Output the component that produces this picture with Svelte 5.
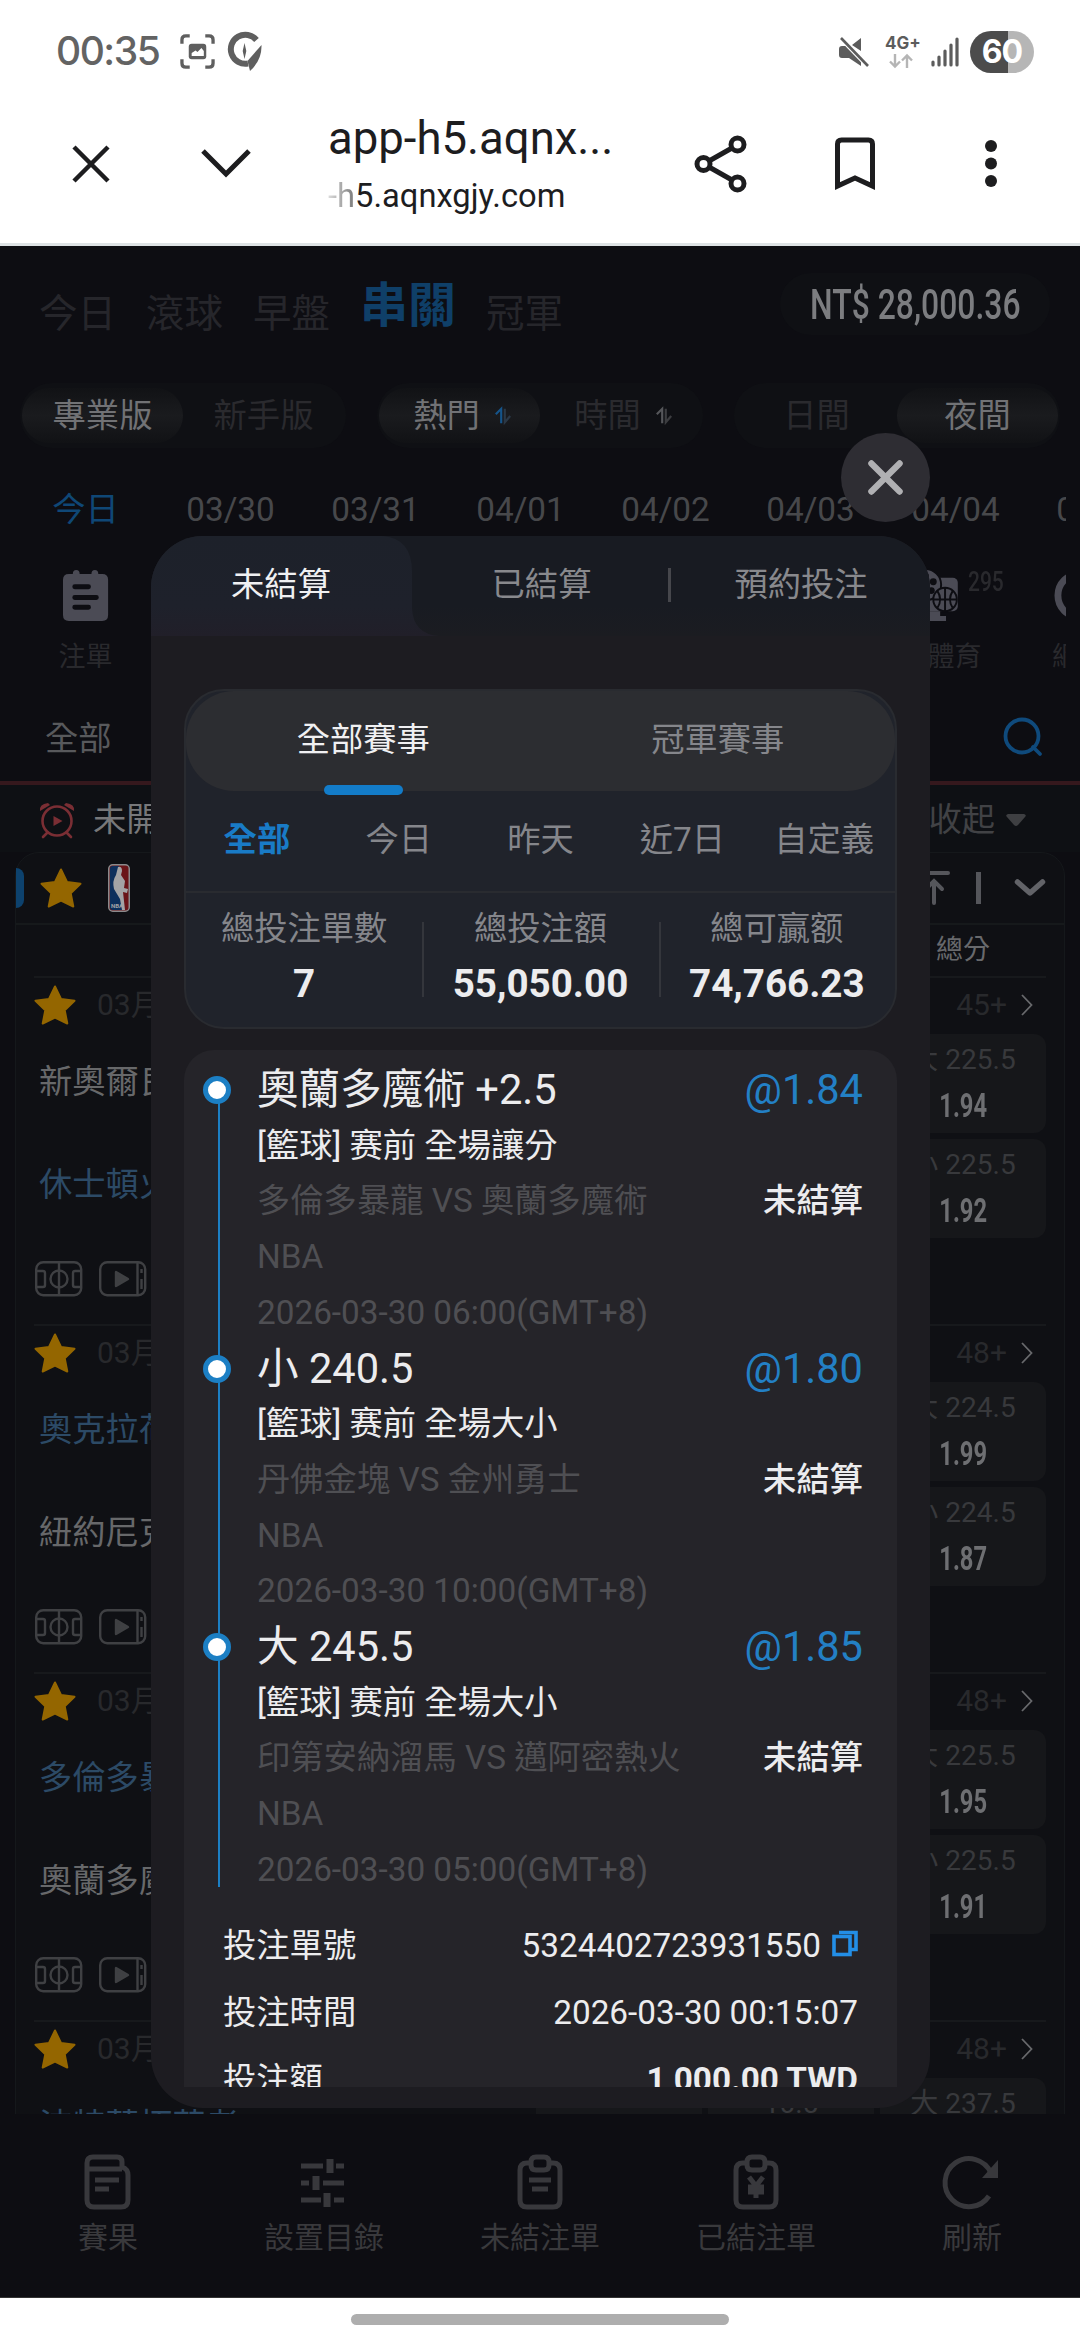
<script lang="ts">
interface Game {
  date: string;
  more: string;
  home: string;
  away: string;
  fav: "home" | "away";
  spread: string;
  over: [string, string];
  under: [string, string];
}

interface Leg {
  pick: string;
  odds: string;
  market: string;
  teams: string;
  time: string;
}

const NAV = ["今日", "滾球", "早盤", "串關", "冠軍"];
const DATES = ["今日", "03/30", "03/31", "04/01", "04/02", "04/03", "04/04", "04/05"];
const PERIODS = ["全部", "今日", "昨天", "近7日", "自定義"];

const STATS = [
  { label: "總投注單數", value: "7" },
  { label: "總投注額", value: "55,050.00" },
  { label: "總可贏额", value: "74,766.23" },
];

const GAMES: Game[] = [
  { date: "03月30日", more: "45+", home: "新奧爾良鵜鶘", away: "休士頓火箭", fav: "away", spread: "5.5", over: ["225.5", "1.94"], under: ["225.5", "1.92"] },
  { date: "03月30日", more: "48+", home: "奧克拉荷馬雷霆", away: "紐約尼克", fav: "home", spread: "8.5", over: ["224.5", "1.99"], under: ["224.5", "1.87"] },
  { date: "03月30日", more: "48+", home: "多倫多暴龍", away: "奧蘭多魔術", fav: "home", spread: "2.5", over: ["225.5", "1.95"], under: ["225.5", "1.91"] },
  { date: "03月30日", more: "48+", home: "波特蘭拓荒者", away: "華盛頓巫師", fav: "home", spread: "10.5", over: ["237.5", "1.93"], under: ["237.5", "1.93"] },
];

const LEGS: Leg[] = [
  { pick: "奧蘭多魔術 +2.5", odds: "@1.84", market: "[籃球] 赛前 全場讓分", teams: "多倫多暴龍 VS 奧蘭多魔術", time: "2026-03-30 06:00(GMT+8)" },
  { pick: "小 240.5", odds: "@1.80", market: "[籃球] 赛前 全場大小", teams: "丹佛金塊 VS 金州勇士", time: "2026-03-30 10:00(GMT+8)" },
  { pick: "大 245.5", odds: "@1.85", market: "[籃球] 赛前 全場大小", teams: "印第安納溜馬 VS 邁阿密熱火", time: "2026-03-30 05:00(GMT+8)" },
];

let nav = $state("串關");
let date = $state("今日");
let period = $state("全部");
let open = $state(true);
</script>

{#snippet star()}
  <svg class="star" viewBox="0 0 42 40"><path d="M21 1.500 27 14l13.500 1.800-9.800 9.500 2.600 13.200L21 32.500 8.700 38.500l2.600-13.200L1.500 15.800 15 14z" fill="#946600" stroke="#946600" stroke-width="2" stroke-linejoin="round" /></svg>
{/snippet}

{#snippet sort(active: boolean)}
  <svg class="sort" viewBox="0 0 20 20" fill="none" stroke-width="2.400">
    <path d="M2 8 8 2v16" stroke={active ? "#15548a" : "#55565a"} />
    <path d="M12 2v15l6-7" stroke={active ? "#2b3846" : "#3c3d40"} />
  </svg>
{/snippet}

<div class="screen">
  <div class="status">
    <span class="clock">00:35</span>
    <svg class="shot" viewBox="0 0 36 36" fill="none" stroke="#5f5f5f" stroke-width="3.400">
      <path d="M2 10V6q0-4 4-4h4M26 2h4q4 0 4 4v4M34 26v4q0 4-4 4h-4M10 34H6q-4 0-4-4v-4" />
      <rect x="9" y="10" width="18" height="16" rx="3" fill="#5f5f5f" stroke="none" />
      <path d="M12 22.500v-3l4-2.500 2 1.500 4-4 2.500 3v5z" fill="#fff" stroke="none" />
    </svg>
    <svg class="compass" viewBox="0 0 36 40">
      <path d="M29.500 8A14.500 14.500 0 1 0 21 31.500" fill="none" stroke="#5f5f5f" stroke-width="6" />
      <path d="M34.500 13 20.500 29 23 39q12-11 11.500-26z" fill="#5f5f5f" />
      <path d="M17.500 11l1.800 8-1.800 8-1.800-8z" fill="#5f5f5f" />
    </svg>
    <span class="grow"></span>
    <svg class="mute" viewBox="0 0 30 30">
      <path d="M0 12q0-3 3-3h5l14 14v6L10 21H3q-3 0-3-3zM22 1v13L13 8z" fill="#5c5c5c" />
      <path d="M2 1 29 29" stroke="#fff" stroke-width="5" /><path d="M2 1 29 29" stroke="#5c5c5c" stroke-width="2.600" />
    </svg>
    <div class="net">
      <span>4G+</span>
      <svg viewBox="0 0 24 14" fill="none" stroke="#b5b5b5" stroke-width="2.400"><path d="M6 0v12M1 7.500l5 5 5-5M18 14V2M13 6.500l5-5 5 5" /></svg>
    </div>
    <svg class="signal" viewBox="0 0 28 30" stroke="#5c5c5c" stroke-width="3.200" stroke-linecap="round"><path d="M2 25v3M8 20v8M14 14v14M20 8v20M26 2v26" /></svg>
    <div class="battery">60</div>
  </div>

  <div class="browser">
    <svg class="b-close" viewBox="0 0 38 38" stroke="#1d1d1f" stroke-width="4.500"><path d="M2 2l34 34M36 2 2 36" /></svg>
    <svg class="b-down" viewBox="0 0 50 30" fill="none" stroke="#1d1d1f" stroke-width="5"><path d="M2 2l23 23L48 2" /></svg>
    <div class="url">
      <span class="title">app-h5.aqnx...</span>
      <span class="host"><i>-h</i>5.aqnxgjy.com</span>
    </div>
    <svg class="b-share" viewBox="0 0 54 58" fill="none" stroke="#1d1d1f" stroke-width="5">
      <circle cx="9.500" cy="29" r="6.500" /><circle cx="43.500" cy="9.500" r="6.500" /><circle cx="43.500" cy="48.500" r="6.500" />
      <path d="M15 26 38 13M15 32l23 13" />
    </svg>
    <svg class="b-mark" viewBox="0 0 42 54" fill="none" stroke="#1d1d1f" stroke-width="5"><path d="M3.500 49V7q0-4 4-4h27q4 0 4 4v42L21 41z" /></svg>
    <svg class="b-dots" viewBox="0 0 14 50" fill="#1d1d1f"><circle cx="7" cy="7" r="6" /><circle cx="7" cy="24.500" r="6" /><circle cx="7" cy="42" r="6" /></svg>
  </div>

  <div class="app">
    <div class="top">
      {#each NAV as n (n)}
        <button type="button" class:active={nav === n} onclick={() => (nav = n)}>{n}</button>
      {/each}
      <div class="balance"><span>NT$ 28,000.36</span></div>
    </div>

    <div class="modes">
      <div class="seg"><span class="on">專業版</span><span>新手版</span></div>
      <div class="seg sorted"><span class="on">熱門{@render sort(true)}</span><span>時間{@render sort(false)}</span></div>
      <div class="seg"><span>日間</span><span class="on">夜間</span></div>
    </div>

    <div class="dates">
      {#each DATES as d (d)}
        <button type="button" class:active={date === d} onclick={() => (date = d)}>{d}</button>
      {/each}
    </div>

    <div class="sports">
      <div class="sport">
        <svg viewBox="0 0 46 52"><path d="M6 4h4q0-4 3.500-4T17 4h12q0-4 3.500-4T36 4h4q6 0 6 6v36q0 6-6 6H6q-6 0-6-6V10q0-6 6-6z" fill="#4b4b55" /><path d="M12 17h14M12 28h22M12 38h14" stroke="#0d0d12" stroke-width="5" stroke-linecap="round" /></svg>
        <span>注單</span>
      </div>
      <span class="grow"></span>
      <div class="sport">
        <svg viewBox="0 0 62 52">
          <rect x="8" y="8" width="54" height="34" rx="5" fill="#4b4b55" /><path d="M26 42h18v5h6v5H20v-5h6z" fill="#4b4b55" />
          <circle cx="29" cy="15" r="16" fill="#4b4b55" stroke="#0d0d12" stroke-width="2" />
          <g fill="#0d0d12"><circle cx="29" cy="6" r="3.500" /><circle cx="37" cy="12" r="3.500" /><circle cx="35" cy="21" r="3.500" /><circle cx="23" cy="21" r="3.500" /></g>
          <g fill="#4b4b55" stroke="#0d0d12" stroke-width="2"><circle cx="49" cy="30" r="12" /><path d="M37 30h24M49 18v24M41 21q6 9 0 18M57 21q-6 9 0 18" fill="none" /></g>
        </svg>
        <span>電子體育</span>
        <b>295</b>
      </div>
      <div class="sport last">
        <svg viewBox="0 0 52 52" fill="none" stroke="#4b4b55"><circle cx="26" cy="26" r="22" stroke-width="7" /><circle cx="26" cy="26" r="11" stroke-width="4" /></svg>
        <span>網球</span>
      </div>
    </div>

    <div class="search">
      <span>全部</span>
      <svg viewBox="0 0 40 40" fill="none" stroke="#0f4a7c" stroke-width="3.800"><circle cx="19" cy="19" r="16.500" /><path d="M30 30l7 7" stroke-linecap="round" /></svg>
    </div>

    <div class="group">
      <svg class="alarm" viewBox="0 0 36 36" fill="none" stroke="#7a2e34" stroke-width="2.600">
        <circle cx="18" cy="19" r="14.500" /><path d="M8 31l-4 4M28 31l4 4" stroke-linecap="round" />
        <path d="M1 9q-1-7 8-8l2 2zM35 9q1-7-8-8l-2 2zM14.500 14v10l9-5z" fill="#7a2e34" stroke="none" />
      </svg>
      <span class="label">未開賽</span>
      <span class="fold">收起</span>
      <svg class="tri" viewBox="0 0 20 12"><path d="M2 0h16q3 1 1 3l-7 8q-2 2-4 0L1 3Q-1 1 2 0z" fill="#3e3f42" /></svg>
    </div>

    <div class="league">
      <div class="league-head">
        <i class="mark"></i>
        {@render star()}
        <svg class="nba" viewBox="0 0 22 48">
          <rect x=".75" y=".75" width="20.500" height="46.500" rx="4" fill="#6a1418" stroke="#8a8a8c" stroke-width="1.500" />
          <path d="M2 5q0-3 3-3h6L9 12l3 14 4 10-2 10H5q-3 0-3-3z" fill="#0d2f5c" />
          <path d="M10 3q4-1 4 4l-1 4 4 6-1 7 4 1-1 4-4-1 2 18H14l-2-11-6-10q-2-8 2-14z" fill="#a3a3a5" />
          <text x="3" y="44" font-size="6" font-weight="700" fill="#a3a3a5">NBA</text>
        </svg>
        <span class="grow"></span>
        <svg class="pin" viewBox="0 0 36 36" fill="none" stroke="#55565b" stroke-width="4" stroke-linecap="round"><path d="M6 3h28M20 33V12M12 19l8-8 8 8" /></svg>
        <i class="bar"></i>
        <svg class="chev" viewBox="0 0 32 20" fill="none" stroke="#626368" stroke-width="5.500" stroke-linecap="round" stroke-linejoin="round"><path d="M3.500 4 16 15 28.500 4" /></svg>
      </div>
      <div class="cols"><span>獨贏</span><span>讓分</span><span>總分</span></div>

      {#each GAMES as g (g.home)}
        <div class="game">
          <div class="meta">
            {@render star()}
            <span>{g.date}</span>
            <span class="more">{g.more}</span>
            <svg class="next" viewBox="0 0 12 22" fill="none" stroke="#68696c" stroke-width="1.800"><path d="M1 1l9.500 10L1 21" /></svg>
          </div>
          <div class="body">
            <div class="teams">
              <span class:fav={g.fav === "home"}>{g.home}</span>
              <span class:fav={g.fav === "away"}>{g.away}</span>
            </div>
            <div class="odds">
              <div class="cell"></div>
              <div class="cell"><span>{g.spread}</span></div>
              <div class="cell"><span>大 {g.over[0]}</span><b>{g.over[1]}</b></div>
              <div class="cell"></div>
              <div class="cell"><span>{g.spread}</span></div>
              <div class="cell"><span>小 {g.under[0]}</span><b>{g.under[1]}</b></div>
            </div>
          </div>
          <div class="links">
            <svg viewBox="0 0 48 36" fill="none" stroke="#3f4043" stroke-width="2.400"><rect x="1.200" y="1.200" width="45" height="33" rx="7" /><circle cx="24" cy="18" r="8.500" /><path d="M24 1v33M1 10h7q2 0 2 2v12q0 2-2 2H1M47 10h-7q-2 0-2 2v12q0 2 2 2h7" /></svg>
            <svg viewBox="0 0 48 36" fill="none" stroke="#3f4043" stroke-width="2.400"><rect x="1.200" y="1.200" width="45" height="33" rx="7" /><path d="M38.500 1v34M42.500 8v4M42.500 18v10" /><path d="M17 11v14l12-7z" fill="#3f4043" stroke-linejoin="round" /></svg>
          </div>
        </div>
      {/each}
    </div>
  </div>

  <div class="tabbar">
    <div>
      <svg viewBox="0 0 56 56"><path d="M7 46V9q0-6 6-6h24q5 0 5 5v5q6 2 6 8v25q0 7-7 7H14q-7 0-7-7zM8 15h34M15 26h24M15 35h14" /></svg>
      <span>賽果</span>
    </div>
    <div>
      <svg viewBox="0 0 56 56"><path d="M5 12h22M40 12h8M5 29h8M27 29h21M5 46h20M38 46h10" /><path class="knob" d="M34 5v14M20 22v14M31 39v14" /></svg>
      <span>設置目錄</span>
    </div>
    <div>
      <svg viewBox="0 0 56 56"><path d="M19 9h-4q-7 0-7 7v30q0 7 7 7h26q7 0 7-7V16q0-7-7-7h-4M24 3h8q5 0 5 5v3q0 5-5 5h-8q-5 0-5-5V8q0-5 5-5zM17 26h22M20 35h16" /></svg>
      <span>未結注單</span>
    </div>
    <div>
      <svg viewBox="0 0 56 56"><path d="M19 9h-4q-7 0-7 7v30q0 7 7 7h26q7 0 7-7V16q0-7-7-7h-4M24 3h8q5 0 5 5v3q0 5-5 5h-8q-5 0-5-5V8q0-5 5-5zM21 23l7 9 7-9M20 33h16M20 38h16M28 32v12" /></svg>
      <span>已結注單</span>
    </div>
    <div>
      <svg viewBox="0 0 56 56"><path d="M45 42A24 24 0 1 1 47 19" /><path class="tip" d="M54 6v18H38z" /></svg>
      <span>刷新</span>
    </div>
  </div>

  <div class="gesture"><i></i></div>

  {#if open}
    <button type="button" class="close" aria-label="close" onclick={() => (open = false)}>
      <svg viewBox="0 0 36 36" stroke="#b0b0b3" stroke-width="6.500" stroke-linecap="round"><path d="M3.500 3.500l29 29M32.500 3.500l-29 29" /></svg>
    </button>

    <div class="modal">
      <div class="modal-tabs">
        <svg class="tab-bg" viewBox="0 0 288 100" preserveAspectRatio="none">
          <defs><linearGradient id="tab" x2="0" y2="1"><stop offset="0" stop-color="#1d212a" /><stop offset=".7" stop-color="#1e212b" /><stop offset="1" stop-color="#211f29" /></linearGradient></defs>
          <path d="M0 0h231q30 2 30 36v36q1 26 27 28H0z" fill="url(#tab)" />
        </svg>
        <span class="on">未結算</span>
        <span>已結算</span>
        <span>預約投注</span>
      </div>

      <div class="summary">
        <div class="kinds">
          <span class="on">全部賽事</span>
          <span>冠軍賽事</span>
        </div>
        <div class="periods">
          {#each PERIODS as p (p)}
            <button type="button" class:active={period === p} onclick={() => (period = p)}>{p}</button>
          {/each}
        </div>
        <div class="stats">
          {#each STATS as s (s.label)}
            <div><span>{s.label}</span><b>{s.value}</b></div>
          {/each}
        </div>
      </div>

      <div class="ticket">
        <div class="legs">
          {#each LEGS as leg (leg.pick)}
            <div class="leg">
              <i class="dot"></i>
              <div class="pick"><span>{leg.pick}</span><span class="at">{leg.odds}</span></div>
              <div class="market">{leg.market}</div>
              <div class="dim">{leg.teams}<b>未結算</b></div>
              <div class="dim">NBA</div>
              <div class="dim">{leg.time}</div>
            </div>
          {/each}
        </div>
        <div class="details">
          <div>
            <span>投注單號</span>
            <span class="no">5324402723931550
              <svg viewBox="0 0 26 26" fill="none" stroke="#238ee6" stroke-width="3.600"><rect x="2" y="6.500" width="16" height="18" /><path d="M7 2.500h17v17h-5" /></svg>
            </span>
          </div>
          <div><span>投注時間</span><span>2026-03-30 00:15:07</span></div>
          <div><span>投注額</span><b>1,000.00 TWD</b></div>
        </div>
      </div>
    </div>
  {/if}
</div>

<style>
  :global(body) { margin: 0; background: #fff; }
  .screen {
    position: relative;
    width: 1080px;
    height: 2340px;
    overflow: hidden;
    display: flex;
    flex-direction: column;
    background: #fff;
    font-family: Roboto, "Noto Sans CJK TC", sans-serif;
    font-size: 33.3px;
    line-height: 1.2;
  }
  .screen * { box-sizing: border-box; }
  svg { display: block; flex-shrink: 0; overflow: visible; }
  button { background: none; border: 0; padding: 0; margin: 0; font: inherit; color: inherit; cursor: pointer; white-space: nowrap; }
  .grow { flex: 1; }

  .status { height: 103px; padding: 0 46px 0 56px; display: flex; align-items: center; }
  .clock { width: 124px; font-family: Inter, sans-serif; font-size: 39px; font-weight: 500; letter-spacing: -1.5px; color: #636363; }
  .shot { width: 35px; height: 35px; margin-right: 12px; }
  .compass { width: 36px; height: 40px; }
  .mute { width: 30px; height: 30px; margin-right: 16px; }
  .net { width: 36px; margin-right: 10px; font-family: Inter, sans-serif; font-size: 17px; line-height: 15px; font-weight: 700; color: #5c5c5c; display: flex; flex-direction: column; gap: 3px; }
  .net svg { width: 24px; height: 14px; margin-left: 4px; }
  .signal { width: 28px; height: 30px; margin-right: 11px; }
  .battery { width: 64px; height: 42px; border-radius: 21px; background: linear-gradient(90deg, #4c4c4c 60%, #b6b6b6 60%); color: #fff; font: 700 32px/42px Inter, sans-serif; letter-spacing: -1px; text-align: center; }

  .browser { height: 143px; padding: 0 82px 19px 72px; display: flex; align-items: center; color: #1d1d1f; border-bottom: 3px solid #dde2e4; }
  .b-close { width: 38px; height: 38px; margin-right: 91px; }
  .b-down { width: 50px; height: 30px; margin-right: 77px; }
  .url { width: 367px; padding-top: 4px; display: flex; flex-direction: column; }
  .title { font-size: 45.5px; line-height: 60px; }
  .host { font-size: 32.7px; line-height: 54px; }
  .host i { font-style: normal; background: linear-gradient(90deg, #ddd, #777); background-clip: text; color: transparent; }
  .b-share { width: 54px; height: 58px; margin-right: 86px; }
  .b-mark { width: 42px; height: 54px; margin-right: 108px; }
  .b-dots { width: 14px; height: 50px; }

  .app { height: 1868px; overflow: hidden; background: #0d0d12; color: #47484b; }
  .top { height: 116px; padding: 0 30px 0 39px; display: flex; align-items: center; gap: 30px; }
  .top button { font-size: 38.5px; line-height: 46px; padding-top: 20px; color: #26262b; }
  .top button.active { font-size: 48px; font-weight: 700; color: #0f3f68; padding-top: 4px; }
  .balance { margin-left: auto; width: 270px; height: 62px; border-radius: 31px; background: #0f1014; color: #7c7d80; display: flex; align-items: center; justify-content: center; }
  .balance span { font-size: 42.5px; font-weight: 500; white-space: nowrap; transform: scaleX(0.75); }

  .modes { height: 104px; padding: 21px 20px 18px; display: flex; justify-content: space-between; }
  .seg { width: 326px; height: 65px; padding: 5px 2px; border-radius: 32px; background: #0f1014; display: flex; color: #2a2a2e; }
  .seg span { flex: 1; display: flex; align-items: center; justify-content: center; gap: 14px; border-radius: 28px; }
  .seg .on { background: linear-gradient(#111215, #1a1b1e 50%, #111215); color: #717275; }
  .sorted span { padding-left: 6px; }
  .sort { width: 18px; height: 18px; }

  .dates { height: 90px; width: 1066px; padding: 0 0 2px 13px; overflow: hidden; display: flex; align-items: center; }
  .dates button { width: 145px; flex-shrink: 0; }
  .dates button.active { color: #0f4776; }
  .sports { height: 142px; width: 1066px; padding-top: 14px; overflow: hidden; display: flex; align-items: flex-start; }
  .sport { position: relative; width: 171px; flex-shrink: 0; display: flex; flex-direction: column; align-items: center; gap: 20px; font-size: 27px; color: #29292d; }
  .sport svg { height: 51px; }
  .sport b { position: absolute; left: 126px; top: -5px; font-size: 28px; font-weight: 500; transform: scaleX(0.75); transform-origin: left; }
  .sport.last { width: 102px; margin: 0 -64px 0 15px; }

  .search { height: 87px; padding: 0 37px 2px 45px; display: flex; align-items: center; justify-content: space-between; color: #58595c; border-bottom: 4px solid #35181d; }
  .search svg { width: 40px; height: 40px; margin-bottom: 4px; }
  .group { height: 67px; padding: 2px 54px 0 39px; display: flex; align-items: center; background: #0e1014; }
  .alarm { width: 36px; height: 36px; margin-right: 18px; }
  .label { color: #77787a; }
  .fold { margin-left: auto; margin-right: 11px; color: #414245; }
  .tri { width: 20px; height: 12px; }

  .league { width: 1050px; margin: 0 15px; border: 1px solid #15181b; border-radius: 24px 24px 0 0; background: #0f1014; }
  .league-head { height: 72px; padding-right: 18px; display: flex; align-items: center; border-bottom: 2px solid #16191b; }
  .mark { width: 8px; height: 40px; border-radius: 0 10px 10px 0; background: #0d426e; margin-right: 16px; }
  .star { width: 42px; height: 40px; }
  .nba { width: 22px; height: 48px; margin-left: 26px; }
  .pin { width: 36px; height: 36px; margin-right: 26px; }
  .bar { width: 5px; height: 32px; background: #55565b; margin-right: 33px; }
  .chev { width: 32px; height: 20px; }
  .cols { height: 51px; margin-right: 18px; display: grid; grid-template-columns: repeat(3, 166px); gap: 6px; justify-content: end; align-items: center; text-align: center; font-size: 27px; color: #68696c; }
  .game { height: 348px; margin: 0 18px; border-top: 2px solid #17191c; display: flex; flex-direction: column; }
  .meta { height: 56px; padding-bottom: 2px; display: flex; align-items: center; font-size: 30px; color: #28292c; }
  .meta > span:not(.more) { margin-left: 21px; }
  .more { margin-left: auto; margin-right: 14px; }
  .next { width: 12px; height: 22px; margin-right: 13px; }
  .body { height: 206px; display: flex; justify-content: space-between; }
  .teams { margin: -4px 0 0 5px; display: flex; flex-direction: column; line-height: 103px; color: #67686a; }
  .teams .fav { color: #2c4a66; }
  .odds { display: grid; grid-template-columns: repeat(3, 166px); grid-auto-rows: 99px; gap: 6px; }
  .cell { background: #16171a; border-radius: 12px; font-size: 28px; color: #38393c; text-align: center; display: flex; flex-direction: column; align-items: center; padding-top: 9px; }
  .cell b { margin-top: 9px; font-size: 33px; color: #6e6f72; transform: scaleX(0.72); }
  .links { flex: 1; display: flex; gap: 16px; align-items: center; padding: 0 0 7px 1px; }
  .links svg { width: 48px; height: 36px; }

  .tabbar { height: 184px; padding-top: 40px; display: grid; grid-template-columns: repeat(5, 1fr); background: #0d0d12; border-bottom: 1px solid #333; }
  .tabbar div { display: flex; flex-direction: column; align-items: center; gap: 10px; font-size: 30px; color: #39393c; }
  .tabbar svg { width: 56px; height: 56px; fill: none; stroke: #38383c; stroke-width: 5; }
  .tabbar .knob { stroke-width: 7; }
  .tabbar .tip { fill: #38383c; stroke: none; }
  .gesture { flex: 1; display: flex; justify-content: center; padding-top: 16px; }
  .gesture i { width: 378px; height: 11px; border-radius: 6px; background: #aeaeae; }

  .close { position: absolute; left: 841px; top: 433px; width: 89px; height: 89px; border-radius: 50%; background: #2e2d33; display: flex; align-items: center; justify-content: center; }
  .close svg { width: 35px; height: 35px; }
  .modal { position: absolute; left: 151px; top: 536px; width: 779px; height: 1572px; padding: 0 33px 21px; border-radius: 52px; overflow: hidden; background: #1d1c21; display: flex; flex-direction: column; }
  .modal-tabs { position: relative; height: 100px; flex-shrink: 0; margin: 0 -33px 53px; display: grid; grid-template-columns: 260px 261px 258px; align-items: center; text-align: center; background: linear-gradient(#181b22 70%, #1b1c21); color: #88898d; padding-bottom: 3px; }
  .modal-tabs span { position: relative; }
  .modal-tabs .on { color: #f0f0f2; }
  .modal-tabs span:nth-of-type(2)::after { content: ""; position: absolute; right: 1px; top: 3px; width: 3px; height: 34px; background: #46474c; }
  .tab-bg { position: absolute; left: 0; top: 0; width: 288px; height: 100px; }

  .summary { height: 340px; flex-shrink: 0; border: 2px solid #292b30; border-radius: 40px; background: #20232b; color: #85868b; }
  .kinds { height: 100px; border-radius: 48px; background: #2c2d31; display: grid; grid-template-columns: 1fr 1fr; line-height: 97px; text-align: center; }
  .kinds span { position: relative; }
  .kinds .on { color: #f0f0f2; }
  .kinds .on::after { content: ""; position: absolute; left: 50%; margin-left: -39px; bottom: -4px; width: 79px; height: 10px; border-radius: 5px; background: #137cc9; }
  .periods { height: 102px; padding-bottom: 3px; display: grid; grid-template-columns: repeat(5, 1fr); border-bottom: 2px solid #292b30; }
  .periods .active { color: #197bc6; font-weight: 700; }
  .stats { display: grid; grid-template-columns: repeat(3, 1fr); text-align: center; }
  .stats div { position: relative; display: flex; flex-direction: column; padding-top: 8px; line-height: 55px; }
  .stats div + div::before { content: ""; position: absolute; left: 0; top: 29px; width: 2px; height: 75px; background: #34363c; }
  .stats b { font-size: 38.6px; color: #ececee; }

  .ticket { flex: 1; min-height: 0; margin-top: 21px; border-radius: 30px 30px 0 0; overflow: hidden; background: #252429; color: #ececee; padding-top: 12px; }
  .legs { padding: 0 34px 0 73px; }
  .leg { position: relative; line-height: 55.7px; }
  .leg::before { content: ""; position: absolute; left: -39px; top: 28px; width: 2px; height: 100%; background: #1c7fc4; }
  .leg:last-child::before { height: 240px; }
  .dot { position: absolute; left: -54px; top: 14px; width: 28px; height: 28px; border: 5px solid #1c7fc4; border-radius: 50%; background: #fff; z-index: 1; }
  .pick { display: flex; justify-content: space-between; font-size: 41.6px; }
  .at { color: #2380c5; }
  .dim { display: flex; justify-content: space-between; color: #4f4f53; }
  .dim b { font-weight: 500; color: #ececee; }
  .details { padding: 14px 39px 0; line-height: 67px; }
  .details > div { display: flex; justify-content: space-between; white-space: nowrap; }
  .no { display: flex; align-items: center; gap: 11px; }
  .no svg { width: 26px; height: 26px; margin-bottom: 4px; }
</style>
